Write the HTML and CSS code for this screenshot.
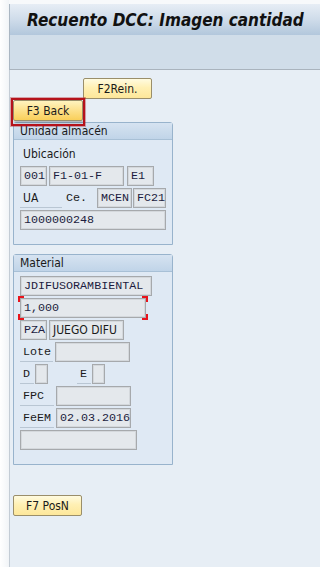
FILE: index.html
```html
<!DOCTYPE html>
<html lang="es">
<head>
    <meta charset="UTF-8">
    <meta name="viewport" content="width=device-width, initial-scale=1.0">
    <title>Recuento DCC: Imagen cantidad</title>
    <link rel="stylesheet" href="styles.css">
</head>
<body>
    <div class="page">
        <div class="side"></div>
        <div class="main">
            <div class="titlebar">
                <h1>Recuento DCC: Imagen cantidad</h1>
            </div>
            <div class="toolbar"></div>

            <div class="content">
                <div class="btn-row">
                    <button class="btn btn-f2">F2Rein.</button>
                </div>
                <div class="btn-row">
                    <button class="btn btn-focus">F3 Back</button>
                </div>

                <div class="group">
                    <div class="group-head">Unidad almacén</div>
                    <div class="group-body">
                        <div class="row">
                            <span class="lbl lbl-sans lbl-plain">Ubicación</span>
                        </div>
                        <div class="row">
                            <span class="fld w27">001</span>
                            <span class="fld w75">F1-01-F</span>
                            <span class="fld w27 ml3">E1</span>
                        </div>
                        <div class="row row-tight">
                            <span class="lbl lbl-sans w42">UA</span>
                            <span class="lbl lbl-plain w33">Ce.</span>
                            <span class="fld w35">MCEN</span>
                            <span class="fld w33">FC21</span>
                        </div>
                        <div class="row">
                            <span class="fld w146">1000000248</span>
                        </div>
                    </div>
                </div>

                <div class="group group-material">
                    <div class="group-head">Material</div>
                    <div class="group-body">
                        <div class="row">
                            <span class="fld w132">JDIFUSORAMBIENTAL</span>
                        </div>
                        <div class="row">
                            <div class="focus-mark">
                                <span class="fld w126">1,000</span>
                            </div>
                        </div>
                        <div class="row">
                            <span class="fld w27">PZA</span>
                            <span class="fld fld-sans w75">JUEGO DIFU</span>
                        </div>
                        <div class="row">
                            <span class="lbl w33">Lote</span>
                            <span class="fld w75"></span>
                        </div>
                        <div class="row row-tight">
                            <span class="lbl w14">D</span>
                            <span class="fld w13"></span>
                            <span class="lbl w14 ml29">E</span>
                            <span class="fld w13"></span>
                        </div>
                        <div class="row">
                            <span class="lbl w34">FPC</span>
                            <span class="fld w75"></span>
                        </div>
                        <div class="row">
                            <span class="lbl w34">FeEM</span>
                            <span class="fld w75">02.03.2016</span>
                        </div>
                        <div class="row">
                            <span class="fld w117"></span>
                        </div>
                    </div>
                </div>

                <div class="btn-row btn-row-bottom">
                    <button class="btn">F7 PosN</button>
                </div>
            </div>
        </div>
    </div>
</body>
</html>
```

FILE: styles.css
```css
* {
    box-sizing: border-box;
}
html, body {
    margin: 0;
    padding: 0;
    height: 100%;
}
body {
    font-family: "DejaVu Sans", Tahoma, sans-serif;
    font-stretch: condensed;
    background: #f7f9fb;
    color: #1a1a1a;
}
.page {
    display: flex;
    height: 567px;
    overflow: hidden;
}
.side {
    width: 9px;
    flex-shrink: 0;
    background: linear-gradient(90deg, #ffffff 0%, #f1f4f7 100%);
}
.main {
    flex: 1;
    display: flex;
    flex-direction: column;
    padding-top: 4px;
}
.titlebar {
    height: 31px;
    border-left: 1px solid #aab6c2;
    background: linear-gradient(180deg, #e6edf5 0%, #cfdcea 50%, #b2c7dc 100%);
    padding-left: 17px;
    display: flex;
    align-items: center;
}
.titlebar h1 {
    margin: 0;
    font-family: "DejaVu Sans", Tahoma, sans-serif;
    font-stretch: condensed;
    font-size: 17px;
    font-weight: bold;
    font-style: italic;
    color: #111;
    white-space: nowrap;
}
.toolbar {
    height: 35px;
    border-left: 1px solid #aab6c2;
    border-bottom: 1px solid #a9b3bd;
    background: #d0dde9;
}
.content {
    flex: 1;
    border-left: 1px solid #c3ccd5;
    background: #e7eef5;
    padding: 8px 0 0 3px;
}
.btn-row {
    display: flex;
    margin-bottom: 1px;
}
.btn {
    height: 21px;
    width: 69px;
    padding: 0;
    font-family: "DejaVu Sans", Tahoma, sans-serif;
    font-stretch: condensed;
    font-size: 12px;
    color: #1a1a1a;
    border: 1px solid #9a8e6a;
    border-radius: 2px;
    background: linear-gradient(180deg, #fffbe0 0%, #fff0b4 45%, #fde79a 100%);
}
.btn-f2 {
    margin-left: 70px;
}
.btn-focus {
    position: relative;
    z-index: 1;
    width: 70px;
    background: linear-gradient(180deg, #fff3bf 0%, #fde290 45%, #f9cf5a 100%);
    box-shadow: 1px 2px 3px rgba(0, 0, 0, 0.25);
}
.btn-focus::after {
    content: "";
    position: absolute;
    top: -3px;
    left: -3px;
    right: -3px;
    bottom: -6px;
    border: 2px solid #b5121b;
    box-shadow: 0 0 0 1px rgba(181, 18, 27, 0.35);
}
.btn-row-bottom {
    margin-top: 30px;
}

/* group boxes */
.group {
    width: 160px;
    border: 1px solid #98b3cc;
    border-radius: 3px 3px 0 0;
    background: #dfe9f4;
}
.group-material {
    margin-top: 9px;
}
.group-head {
    height: 17px;
    line-height: 16px;
    padding-left: 6px;
    font-size: 12px;
    color: #1a1a1a;
    background: linear-gradient(180deg, #d6e3f1 0%, #c0d4e8 100%);
    border-bottom: 1px solid #a8c0d6;
}
.group-body {
    padding: 4px 0 14px 6px;
    display: flex;
    flex-direction: column;
    gap: 2px;
}
.row {
    display: flex;
    gap: 2px;
    height: 20px;
    align-items: stretch;
}
.row-tight {
    gap: 1px;
}

/* fields and labels */
.fld {
    display: flex;
    align-items: center;
    height: 20px;
    padding-left: 3px;
    font-family: "Liberation Mono", "Courier New", monospace;
    font-size: 11.7px;
    color: #1c1c40;
    white-space: nowrap;
    overflow: hidden;
    background: #e4e8ec;
    border: 1px solid #a6a9ac;
    box-shadow: inset 0 0 0 1px #d4d8dc;
}
.fld-sans {
    font-family: "DejaVu Sans", Tahoma, sans-serif;
    font-stretch: condensed;
    font-size: 12px;
    color: #1a1a1a;
}
.lbl {
    display: flex;
    align-items: center;
    height: 20px;
    padding-left: 3px;
    font-family: "Liberation Mono", "Courier New", monospace;
    font-size: 11.7px;
    color: #1a1a1a;
    border-bottom: 1px solid #b9c6d3;
    white-space: nowrap;
}
.lbl-sans {
    font-family: "DejaVu Sans", Tahoma, sans-serif;
    font-stretch: condensed;
    font-size: 12px;
}
.lbl-plain {
    border-bottom: none;
}
.focus-mark {
    margin: -2px 0 -2px -2px;
    padding: 2px;
    background:
        linear-gradient(#e8141c, #e8141c) left top / 6px 2px no-repeat,
        linear-gradient(#e8141c, #e8141c) left top / 2px 6px no-repeat,
        linear-gradient(#e8141c, #e8141c) right top / 6px 2px no-repeat,
        linear-gradient(#e8141c, #e8141c) right top / 2px 6px no-repeat,
        linear-gradient(#e8141c, #e8141c) left bottom / 6px 2px no-repeat,
        linear-gradient(#e8141c, #e8141c) left bottom / 2px 6px no-repeat,
        linear-gradient(#e8141c, #e8141c) right bottom / 6px 2px no-repeat,
        linear-gradient(#e8141c, #e8141c) right bottom / 2px 6px no-repeat;
}

.w13 { width: 13px; }
.w14 { width: 14px; }
.w27 { width: 27px; }
.w33 { width: 33px; }
.w34 { width: 34px; }
.w35 { width: 35px; }
.w42 { width: 42px; }
.w75 { width: 75px; }
.w117 { width: 117px; }
.w126 { width: 126px; }
.w132 { width: 132px; }
.w146 { width: 146px; }
.ml3 { margin-left: 1px; }
.ml29 { margin-left: 28px; }
```
